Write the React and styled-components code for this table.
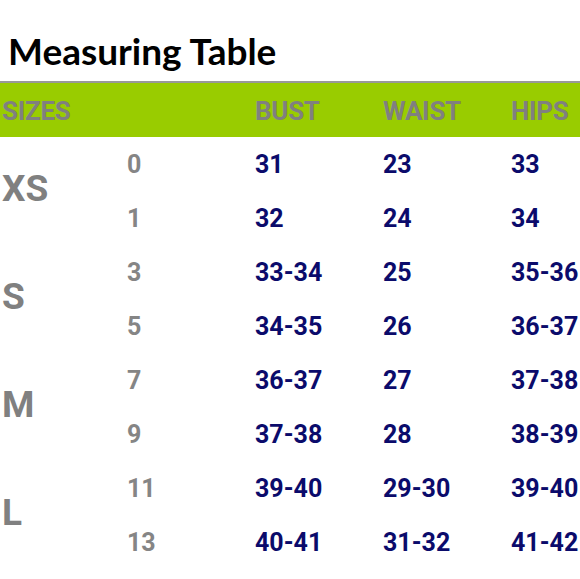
import styled, { createGlobalStyle } from 'styled-components';

const GlobalStyle = createGlobalStyle`
  html, body {
    margin: 0;
    padding: 0;
    background: #fff;
  }
  body {
    width: 580px;
    height: 579px;
    overflow: hidden;
  }
`;

const Page = styled.div`
  width: 580px;
  overflow: hidden;
`;

const Title = styled.h1`
  margin: 0;
  padding: 29px 0 0 8px;
  box-sizing: border-box;
  height: 81px;
  font-family: Lato, 'Open Sans', sans-serif;
  font-weight: 700;
  font-size: 37px;
  line-height: 44px;
  color: #000;
`;

const Grid = styled.div`
  display: grid;
  grid-template-columns: 125px repeat(4, 128px);
  padding-left: 2px;
  font-family: Roboto, 'Liberation Sans', sans-serif;
  font-weight: 700;
`;

const HeaderBar = styled.div`
  grid-column: 1 / -1;
  display: grid;
  grid-template-columns: subgrid;
  margin-left: -2px;
  padding-left: 2px;
  width: 580px;
  height: 56px;
  align-items: center;
  background: #99cc00;
  border-top: 2px solid #999;
  box-sizing: border-box;
`;

const HeadCell = styled.div`
  font-size: 26px;
  color: #808080;
  letter-spacing: -0.3px;
  padding-top: 2px;
  white-space: nowrap;
`;

const SizeLabel = styled.div`
  grid-row: span 2;
  display: flex;
  align-items: center;
  font-size: 37px;
  color: #808080;
  padding-bottom: 6px;
`;

const Cell = styled.div`
  height: 54px;
  display: flex;
  align-items: center;
  font-size: 25px;
  color: ${(p) => (p.$muted ? '#858585' : '#0b0b6b')};
  white-space: nowrap;
`;

const rows = [
  { label: 'XS', items: [['0', '31', '23', '33'], ['1', '32', '24', '34']] },
  { label: 'S', items: [['3', '33-34', '25', '35-36'], ['5', '34-35', '26', '36-37']] },
  { label: 'M', items: [['7', '36-37', '27', '37-38'], ['9', '37-38', '28', '38-39']] },
  { label: 'L', items: [['11', '39-40', '29-30', '39-40'], ['13', '40-41', '31-32', '41-42']] },
];

export default function App() {
  return (
    <Page>
      <GlobalStyle />
      <Title>Measuring Table</Title>
      <Grid>
        <HeaderBar>
          <HeadCell>SIZES</HeadCell>
          <HeadCell />
          <HeadCell>BUST</HeadCell>
          <HeadCell>WAIST</HeadCell>
          <HeadCell>HIPS</HeadCell>
        </HeaderBar>
        {rows.map((group) =>
          group.items.map((r, i) => (
            <>
              {i === 0 && <SizeLabel key={group.label}>{group.label}</SizeLabel>}
              <Cell $muted>{r[0]}</Cell>
              <Cell>{r[1]}</Cell>
              <Cell>{r[2]}</Cell>
              <Cell>{r[3]}</Cell>
            </>
          )),
        )}
      </Grid>
    </Page>
  );
}
